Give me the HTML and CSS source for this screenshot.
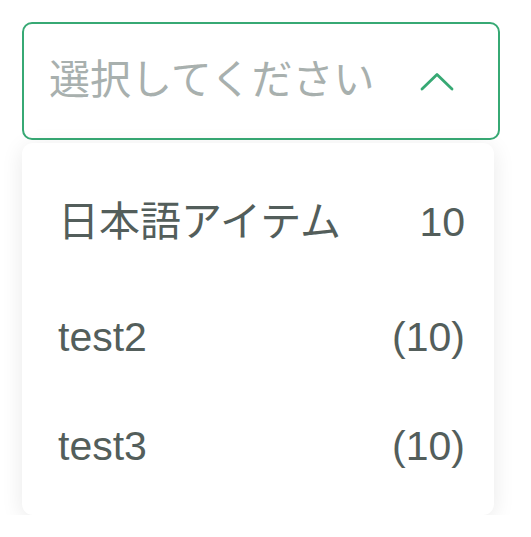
FILE: index.html
```html
<!DOCTYPE html>
<html lang="ja">
<head>
  <meta charset="UTF-8">
  <meta name="viewport" content="width=device-width, initial-scale=1.0">
  <title>Select</title>
  <link rel="stylesheet" href="styles.css">
</head>
<body>
  <div class="select">
    <!-- Trigger -->
    <div class="select-box">
      <span class="placeholder">選択してください</span>
      <svg class="chevron" width="34" height="19" viewBox="0 0 34 19">
        <polyline points="2,17 17,2.5 32,17" fill="none" stroke="#37a974" stroke-width="2.8" stroke-linecap="round" stroke-linejoin="round"/>
      </svg>
    </div>

    <!-- Dropdown list -->
    <ul class="options">
      <li class="option option-ja">
        <span class="label">日本語アイテム</span>
        <span class="count">10</span>
      </li>
      <li class="option">
        <span class="label">test2</span>
        <span class="count">(10)</span>
      </li>
      <li class="option">
        <span class="label">test3</span>
        <span class="count">(10)</span>
      </li>
    </ul>
  </div>
</body>
</html>
```

FILE: styles.css
```css
* {
  margin: 0;
  padding: 0;
  box-sizing: border-box;
}

body {
  font-family: 'Liberation Sans', 'Noto Sans CJK JP', sans-serif;
  background: #fff;
  color: #535e5b;
}

.select {
  padding: 22px 0 0 22px;
  width: 500px;
}

/* Trigger */
.select-box {
  width: 478px;
  height: 118px;
  border: 2px solid #37a974;
  border-radius: 10px;
  background: #fff;
  display: flex;
  align-items: center;
  justify-content: space-between;
  padding: 0 44px 0 25px;
}

.placeholder {
  font-size: 41px;
  color: #a8b0ae;
  line-height: 48px;
  margin-top: -2px;
}

.chevron {
  display: block;
}

/* Dropdown */
.options {
  list-style: none;
  width: 472px;
  margin-top: 3px;
  padding: 19px 0 14px;
  background: #fff;
  border-radius: 11px;
  box-shadow: 0 4px 22px rgba(0, 0, 0, 0.09);
}

.option {
  display: flex;
  justify-content: space-between;
  padding: 31px 29px 31px 36px;
  font-size: 41px;
  line-height: 47px;
}

.option-ja {
  line-height: 59px;
}
```
